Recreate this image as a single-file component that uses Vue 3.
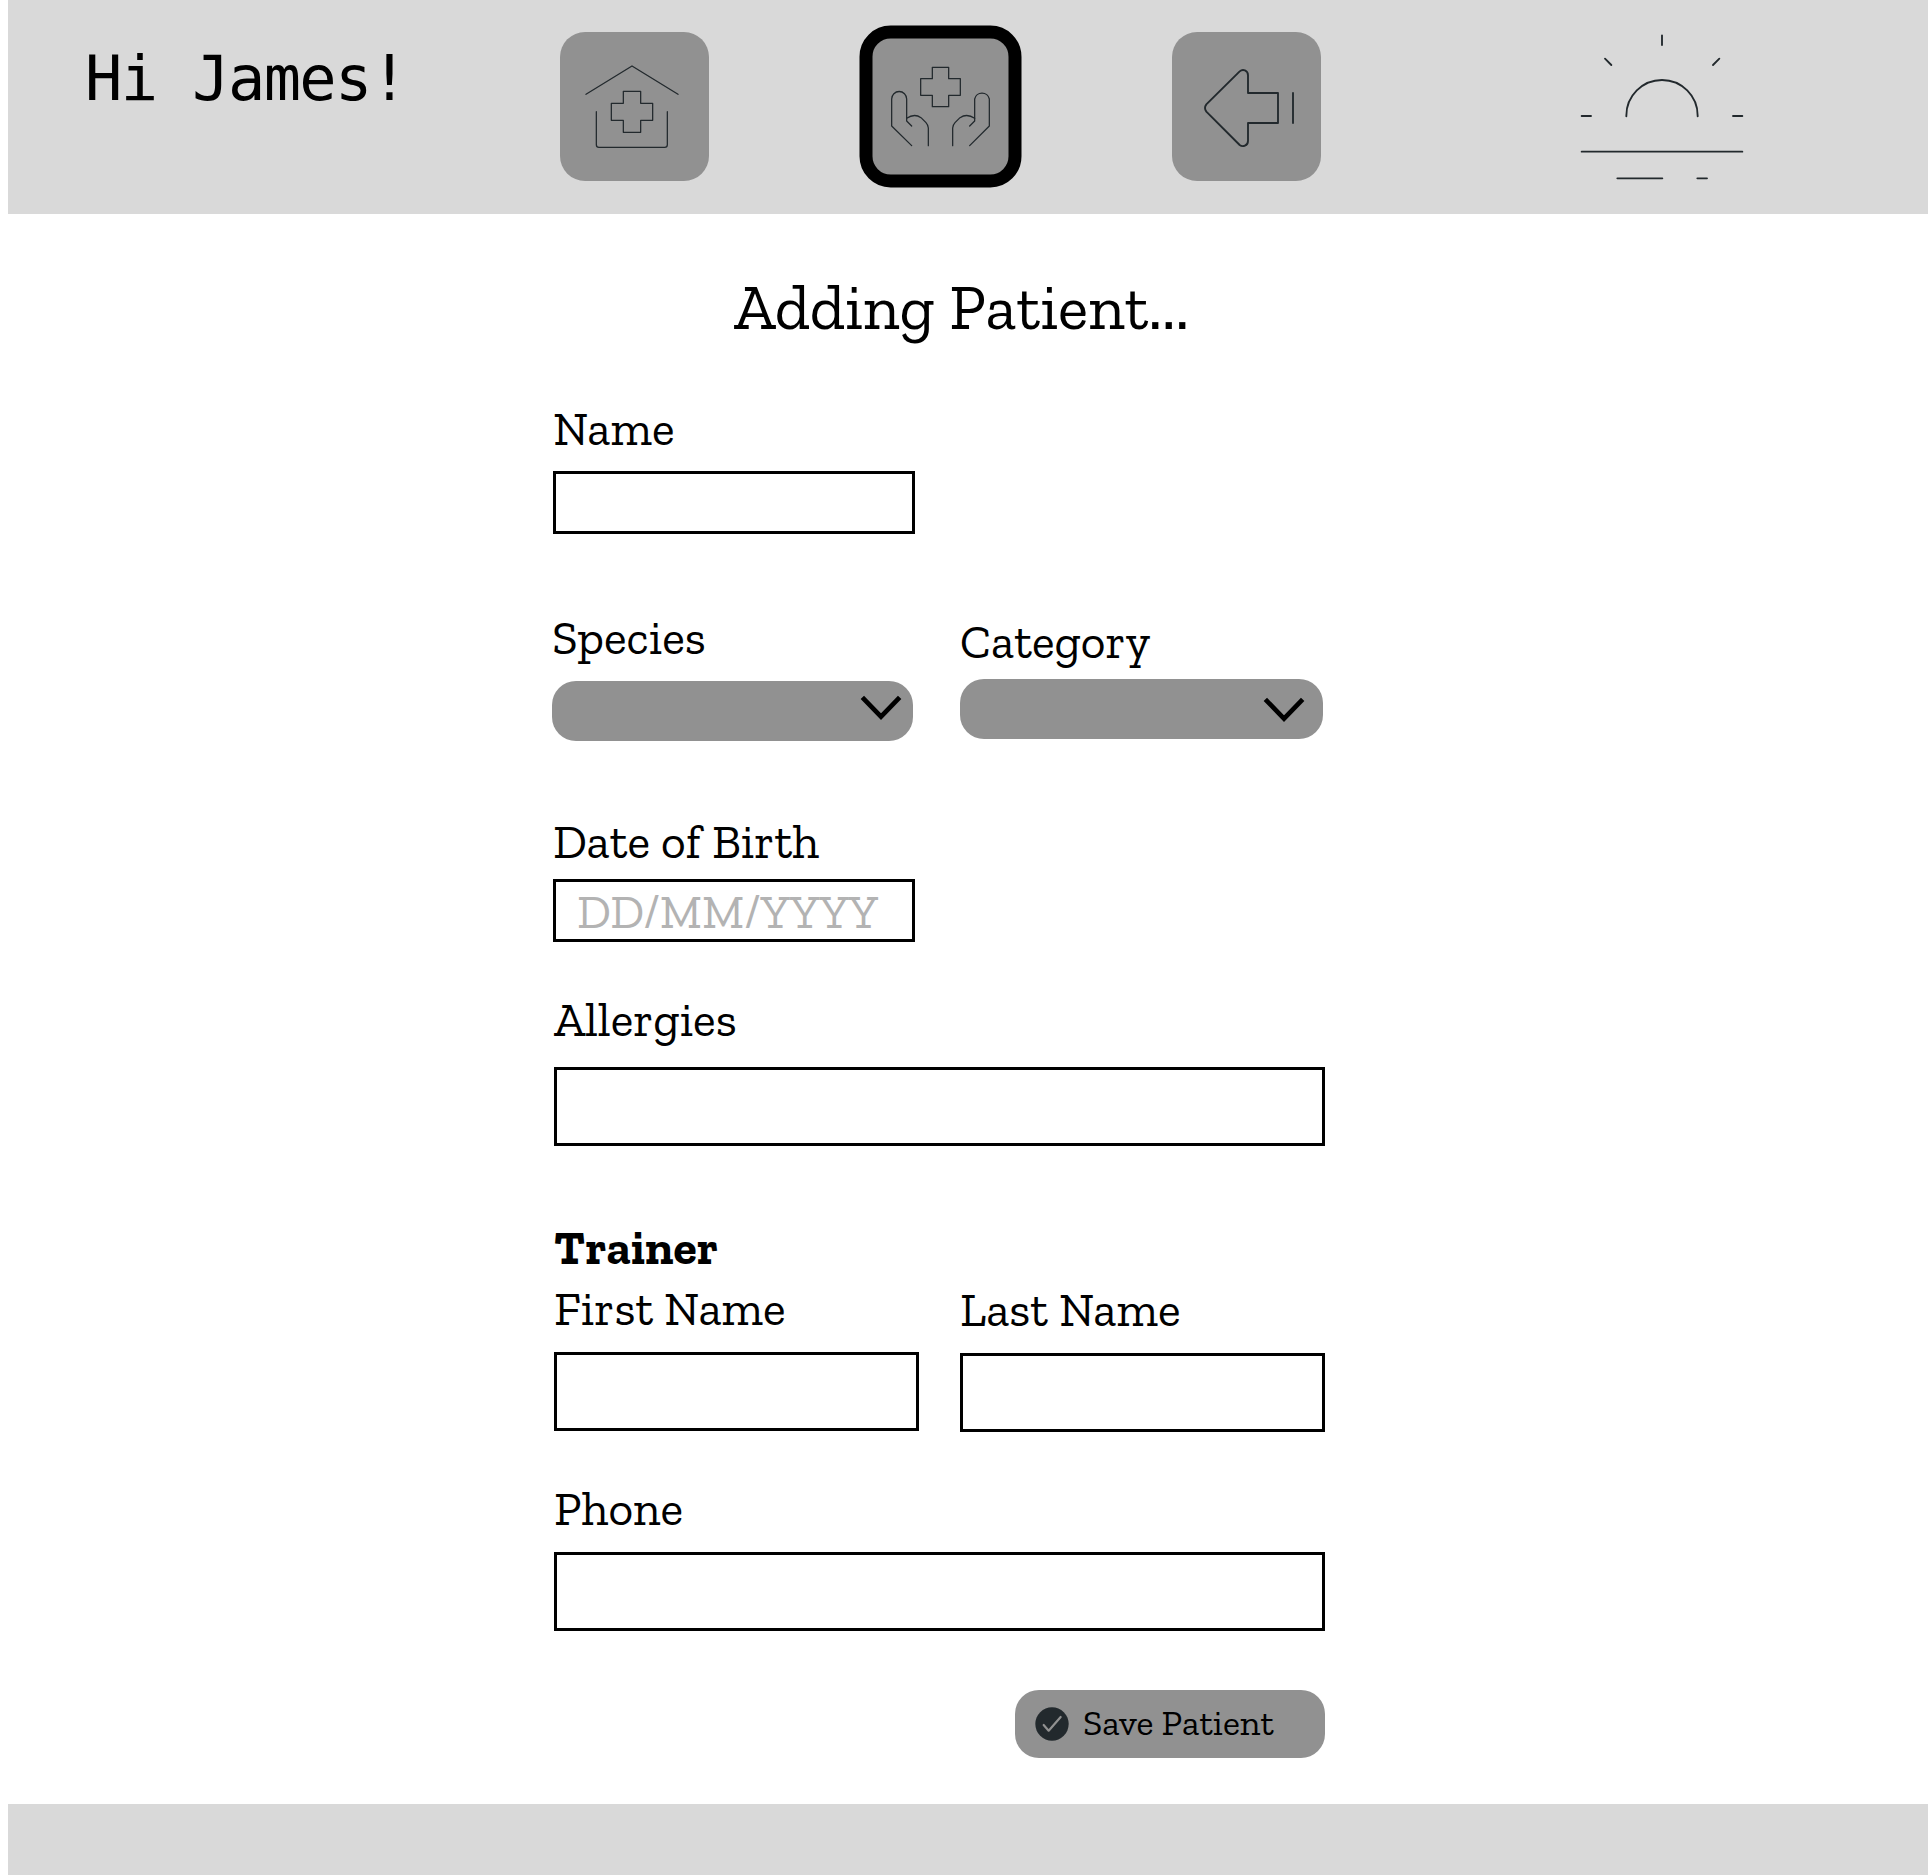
<script setup>
const crossHome = 'M250 244H302V280H338V331H302V367H250V331H214V280H250Z'
const crossCare = 'M247 172H296V206H331V256H296V290H247V256H212V206H247Z'
</script>

<template>
  <div class="page">
    <header class="topbar">
      <div class="greeting">Hi James!</div>
      <button class="tile" aria-label="Home">
        <svg viewBox="60 66 447 447" class="line">
          <path d="M138 253L276 168L414 253" />
          <path d="M169 305V404Q169 412 177 412H374Q382 412 382 404V305" />
          <path :d="crossHome" />
        </svg>
      </button>
      <button class="tile care" aria-label="Patients">
        <svg viewBox="48 66 447 447" class="line">
          <rect class="frame" x="48" y="66" width="447" height="447" rx="74" />
          <path :d="crossCare" />
          <path d="M185 407L125 348V267A22.500 22.500 0 0 1 170 267V333L185 348" />
          <path d="M170 325Q193 309 213 323L228 338Q235 346 235 354V407" />
          <path d="M359 407L418 348V267A22.500 22.500 0 0 0 374 267V333L359 348" />
          <path d="M374 325Q351 309 330 323L315 338Q308 346 308 354V407" />
        </svg>
      </button>
      <button class="tile back" aria-label="Back">
        <svg viewBox="36 36 447 447" class="line thick">
          <path d="M264 219H354V309H264V362C264 378 248 382 239 375L139 275Q131 264 139 253L239 154C248 146 264 150 264 166Z" />
          <path d="M399 219V309" />
        </svg>
      </button>
      <svg class="sun line thick" viewBox="0 0 600 540">
        <path d="M199 289V287A107 107 0 0 1 413 287V289" />
        <path d="M306 46V75M135 116L154 135M478 116L459 135M65 288H93M519 288H547M65 395H547M172 475H307M412 475H441" />
      </svg>
    </header>

    <main class="form">
      <h1>Adding Patient...</h1>

      <section class="field name">
        <label>Name</label>
        <div class="box short"></div>
      </section>

      <div class="row selects">
        <section class="field species">
          <label>Species</label>
          <div class="select">
            <svg class="chevron" viewBox="0 0 120 72"><path d="M4 4L60 62L116 4" /></svg>
          </div>
        </section>
        <section class="field category">
          <label>Category</label>
          <div class="select">
            <svg class="chevron" viewBox="0 0 120 72"><path d="M4 4L60 62L116 4" /></svg>
          </div>
        </section>
      </div>

      <section class="field dob">
        <label>Date of Birth</label>
        <div class="box short"><span class="hint">DD/MM/YYYY</span></div>
      </section>

      <section class="field allergies">
        <label>Allergies</label>
        <div class="box wide"></div>
      </section>

      <h2>Trainer</h2>
      <div class="row trainer">
        <section class="field first">
          <label>First Name</label>
          <div class="box half"></div>
        </section>
        <section class="field last">
          <label>Last Name</label>
          <div class="box half"></div>
        </section>
      </div>

      <section class="field phone">
        <label>Phone</label>
        <div class="box wide"></div>
      </section>

      <button class="save">
        <svg viewBox="0 0 102 102">
          <circle cx="51" cy="51" r="50" />
          <path d="M26 54L41 71L77 30" />
        </svg>
        <span>Save Patient</span>
      </button>
    </main>

    <footer></footer>
  </div>
</template>

<style>
body { margin: 0; background: #fff; }
</style>

<style scoped>
* { box-sizing: border-box; }
.page {
  display: flex;
  flex-direction: column;
  height: 1875px;
  padding-left: 8px;
  color: #000;
  font-family: "Zilla Slab", "DejaVu Serif Condensed", "DejaVu Serif", serif;
}
button { padding: 0; border: 0; font: inherit; color: inherit; }
.topbar {
  display: flex;
  align-items: flex-start;
  flex: none;
  height: 214px;
  background: #d9d9d9;
}
.greeting {
  width: 475px;
  margin: 43px 0 0 77px;
  font-family: "DejaVu Sans Mono", monospace;
  font-size: 62px;
  line-height: 72px;
  letter-spacing: -1.6px;
  white-space: pre;
}
.tile {
  display: block;
  flex: none;
  width: 149px;
  height: 149px;
  margin-top: 32px;
  border-radius: 25px;
  background: #919191;
}
.tile svg { display: block; width: 100%; height: 100%; overflow: visible; }
.care, .back { margin-left: 157px; }
.frame { stroke: #000; stroke-width: 39; }
.sun { width: 200px; height: 180px; margin: 20px 0 0 239px; }
.line {
  fill: none;
  stroke: #22292d;
  stroke-width: 3.8;
  stroke-linecap: round;
  stroke-linejoin: round;
}
.line.thick { stroke-width: 5.6; }

.form {
  display: flex;
  flex-direction: column;
  align-items: flex-start;
  flex: none;
  height: 1590px;
  padding-left: 544px;
}
h1 {
  margin: 57px 0 0 182px;
  font-size: 64px;
  font-weight: 400;
  line-height: 72px;
  white-space: nowrap;
}
h2 { margin: 76px 0 0 2px; font-size: 48px; line-height: 52px; }
.field { display: flex; flex-direction: column; align-items: flex-start; }
label { display: block; font-size: 48px; line-height: 52px; white-space: nowrap; }
.box { border: 3px solid #000; background: #fff; }
.short { width: 362px; height: 63px; margin-left: 1px; }
.wide { width: 771px; height: 79px; margin-left: 2px; }
.half { width: 365px; height: 79px; }
.row { display: flex; align-items: flex-start; }

.name { margin-top: 60px; }
.name label, .dob label { margin-left: 1px; }
.name .box { margin-top: 16px; }
.selects { margin-top: 78px; }
.species { width: 408px; }
.select {
  display: flex;
  justify-content: flex-end;
  width: 361px;
  height: 60px;
  margin-top: 17px;
  padding: 15px 12px 0 0;
  border-radius: 24px;
  background: #919191;
}
.category { margin-top: 4px; }
.category .select { width: 363px; margin-top: 11px; padding: 19px 19px 0 0; }
.chevron {
  width: 40px;
  height: 24px;
  overflow: visible;
  fill: none;
  stroke: #000;
  stroke-width: 14;
}
.dob { margin-top: 75px; }
.dob .box { margin-top: 11px; padding: 4px 0 0 21px; }
.hint {
  display: block;
  color: #b3b3b3;
  font-size: 48px;
  line-height: 52px;
  white-space: nowrap;
}
.allergies { margin-top: 52px; }
.allergies label { margin-left: 2px; }
.allergies .box { margin-top: 21px; }
.trainer { margin-top: 9px; }
.first { width: 406px; margin-left: 2px; }
.first .box, .last .box { margin-top: 17px; }
.last { margin-top: 1px; }
.phone { margin-top: 51px; }
.phone label { margin-left: 2px; }
.phone .box { margin-top: 17px; }
.save {
  display: flex;
  align-items: flex-start;
  width: 310px;
  height: 68px;
  margin: 59px 0 0 463px;
  padding: 16px 0 0 20px;
  border-radius: 24px;
  background: #919191;
}
.save svg { flex: none; width: 34px; height: 34px; margin-top: 1px; }
.save circle { fill: #22292d; }
.save path {
  fill: none;
  stroke: #919191;
  stroke-width: 6.5;
  stroke-linecap: round;
  stroke-linejoin: round;
}
.save span {
  margin: -3px 0 0 14px;
  font-size: 36px;
  line-height: 40px;
  white-space: nowrap;
}
footer { flex: 1; background: #d9d9d9; }
</style>
